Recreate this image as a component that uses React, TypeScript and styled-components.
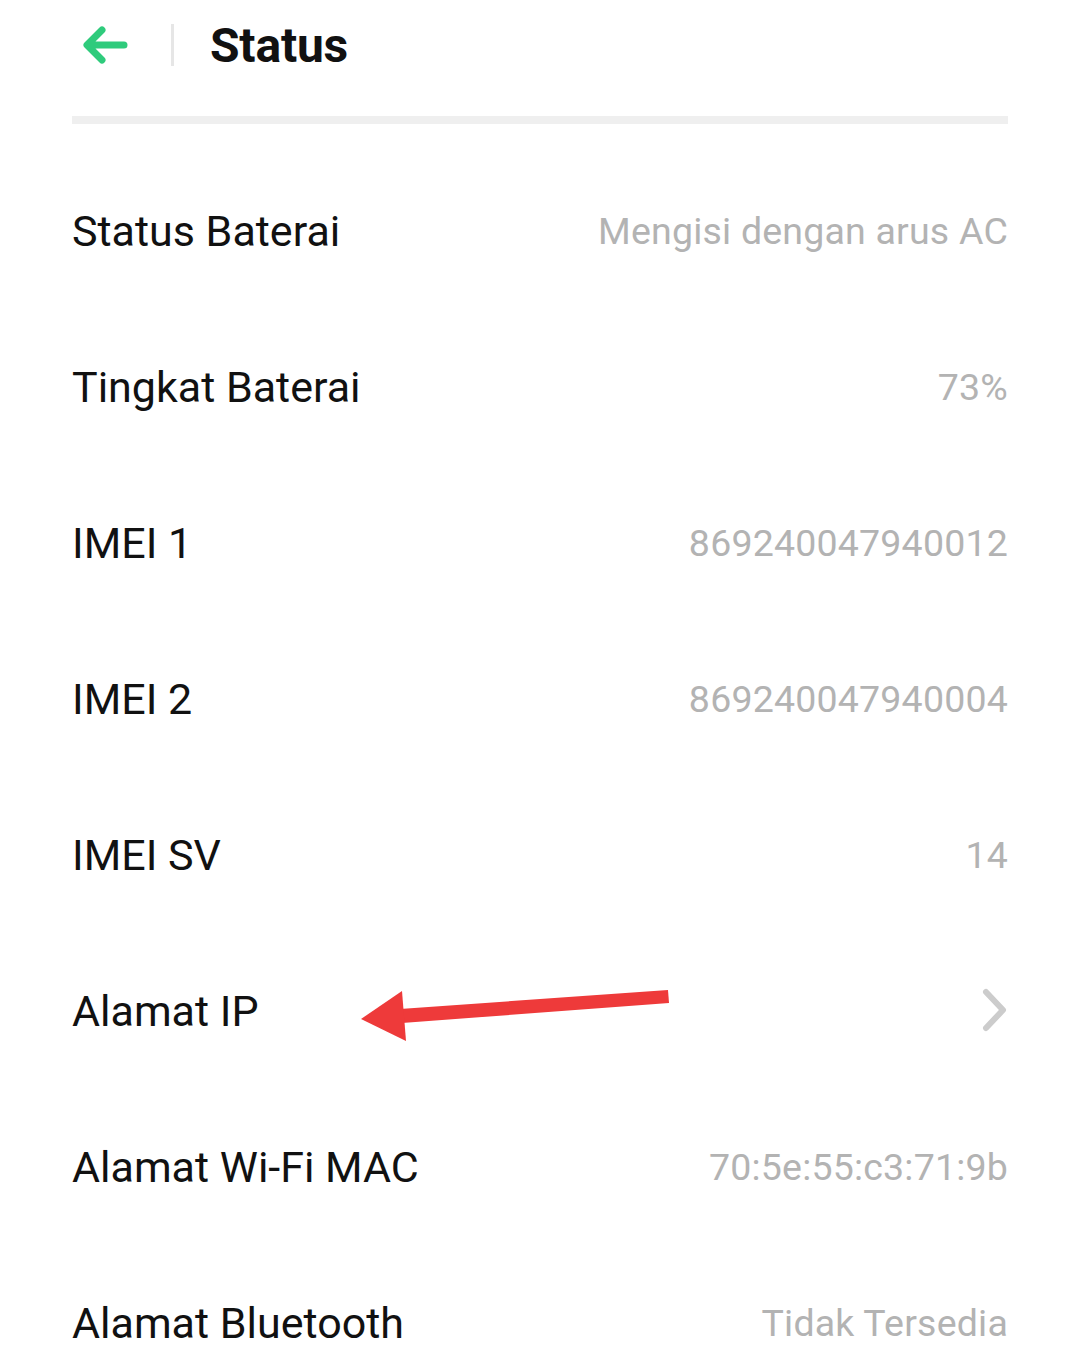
import styled, { createGlobalStyle } from 'styled-components'

const GlobalStyle = createGlobalStyle`
  html, body {
    margin: 0;
    padding: 0;
    background: #ffffff;
  }
  body {
    font-family: Roboto, "Noto Sans", "Liberation Sans", sans-serif;
  }
`

const Page = styled.div`
  width: 1079px;
  min-height: 1358px;
  box-sizing: border-box;
  padding: 0 71px 0 72px;
  position: relative;
  overflow: hidden;
`

const Header = styled.div`
  height: 90px;
  display: flex;
  align-items: center;
  padding-left: 8px;
`

const BackBtn = styled.div`
  width: 50px;
  height: 42px;
  display: flex;
  align-items: center;
  justify-content: center;
  & > svg {
    width: 50px;
    height: 42px;
  }
`

const VDivider = styled.div`
  width: 3px;
  height: 42px;
  background: #e6e6e6;
  margin-left: 41px;
  margin-right: 36px;
`

const Title = styled.h1`
  margin: 0;
  font-size: 48px;
  font-weight: 700;
  color: #111111;
  letter-spacing: -0.2px;
`

const Separator = styled.div`
  height: 8px;
  background: #efefef;
  margin-top: 26px;
  margin-bottom: 29px;
`

const Row = styled.div`
  height: 156px;
  display: flex;
  align-items: center;
  justify-content: space-between;
  position: relative;
`

const Label = styled.div`
  font-size: 43px;
  color: #111111;
`

const Value = styled.div`
  font-size: 37.5px;
  color: #b3b3b3;
  letter-spacing: 0.2px;
`

const Chevron = styled.svg`
  width: 26px;
  height: 46px;
`

// the red pointer drawn over the screenshot
const Annotation = styled.svg`
  position: absolute;
  left: 288px;
  top: 37px;
  width: 320px;
  height: 80px;
  overflow: visible;
`

type Item = { label: string; value?: string; link?: boolean }

const items: Item[] = [
  { label: 'Status Baterai', value: 'Mengisi dengan arus AC' },
  { label: 'Tingkat Baterai', value: '73%' },
  { label: 'IMEI 1', value: '869240047940012' },
  { label: 'IMEI 2', value: '869240047940004' },
  { label: 'IMEI SV', value: '14' },
  { label: 'Alamat IP', link: true },
  { label: 'Alamat Wi-Fi MAC', value: '70:5e:55:c3:71:9b' },
  { label: 'Alamat Bluetooth', value: 'Tidak Tersedia' },
]

export default function App() {
  return (
    <>
      <GlobalStyle />
      <Page>
        <Header>
          <BackBtn>
            <svg viewBox="0 0 50 42" fill="none">
              <path
                d="M44 21 H8 M22 6 L7 21 L22 36"
                stroke="#2fcb7c"
                strokeWidth="7"
                strokeLinecap="round"
                strokeLinejoin="round"
              />
            </svg>
          </BackBtn>
          <VDivider />
          <Title>Status</Title>
        </Header>
        <Separator />
        {items.map((it) => (
          <Row key={it.label}>
            <Label>{it.label}</Label>
            {it.link ? (
              <Chevron viewBox="0 0 26 46" fill="none">
                <path
                  d="M4 4 L21 22 L4 40"
                  stroke="#cccccc"
                  strokeWidth="6"
                  strokeLinecap="round"
                  strokeLinejoin="round"
                />
              </Chevron>
            ) : (
              <Value>{it.value}</Value>
            )}
            {it.link && (
              <Annotation viewBox="0 0 320 80">
                <polygon points="40,39 308,20 309,33 42,53" fill="#ee3a3a" />
                <polygon points="1,49 42,21 46,71" fill="#ee3a3a" />
              </Annotation>
            )}
          </Row>
        ))}
      </Page>
    </>
  )
}
